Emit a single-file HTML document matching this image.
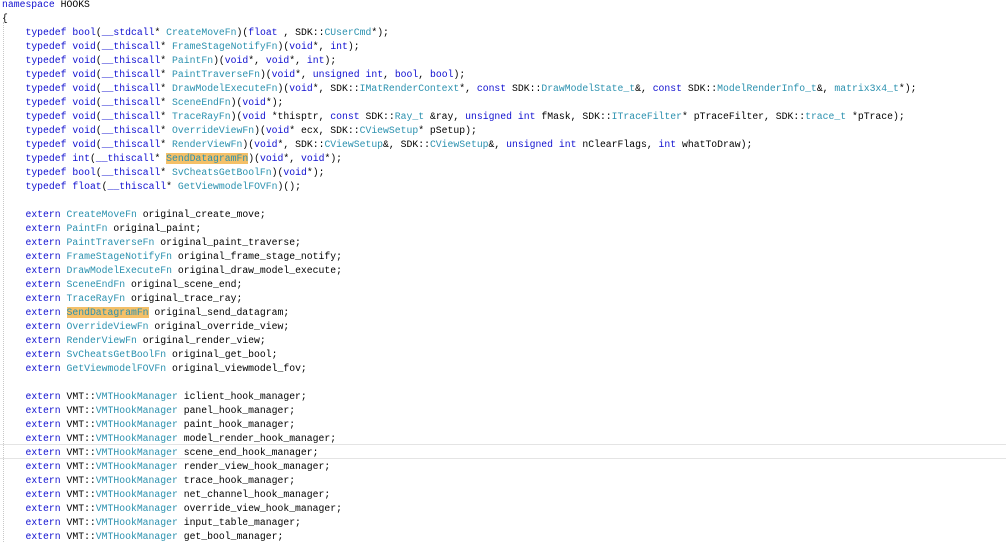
<!DOCTYPE html><html><head><style>
html,body{margin:0;padding:0;background:#fff;width:1006px;height:548px;overflow:hidden}
pre{margin:0;position:absolute;left:2px;top:-2px;font-family:"Liberation Mono",monospace;font-size:9.77px;line-height:14px;color:#000}
.k{color:#1010d0}.t{color:#2b91af}.h{background:#f4c068}
.cur{position:absolute;left:0;top:444px;width:1006px;height:13px;border-top:1px solid #e4e4e4;border-bottom:1px solid #e4e4e4}
.g{position:absolute;left:3px;top:22px;height:520px;border-left:1px dotted #c8c8c8}
</style></head><body>
<div class="cur"></div><div class="g"></div>
<pre><span class="k">namespace</span> HOOKS
{
    <span class="k">typedef</span> <span class="k">bool</span>(<span class="k">__stdcall</span>* <span class="t">CreateMoveFn</span>)(<span class="k">float</span> , SDK::<span class="t">CUserCmd</span>*);
    <span class="k">typedef</span> <span class="k">void</span>(<span class="k">__thiscall</span>* <span class="t">FrameStageNotifyFn</span>)(<span class="k">void</span>*, <span class="k">int</span>);
    <span class="k">typedef</span> <span class="k">void</span>(<span class="k">__thiscall</span>* <span class="t">PaintFn</span>)(<span class="k">void</span>*, <span class="k">void</span>*, <span class="k">int</span>);
    <span class="k">typedef</span> <span class="k">void</span>(<span class="k">__thiscall</span>* <span class="t">PaintTraverseFn</span>)(<span class="k">void</span>*, <span class="k">unsigned</span> <span class="k">int</span>, <span class="k">bool</span>, <span class="k">bool</span>);
    <span class="k">typedef</span> <span class="k">void</span>(<span class="k">__thiscall</span>* <span class="t">DrawModelExecuteFn</span>)(<span class="k">void</span>*, SDK::<span class="t">IMatRenderContext</span>*, <span class="k">const</span> SDK::<span class="t">DrawModelState_t</span>&amp;, <span class="k">const</span> SDK::<span class="t">ModelRenderInfo_t</span>&amp;, <span class="t">matrix3x4_t</span>*);
    <span class="k">typedef</span> <span class="k">void</span>(<span class="k">__thiscall</span>* <span class="t">SceneEndFn</span>)(<span class="k">void</span>*);
    <span class="k">typedef</span> <span class="k">void</span>(<span class="k">__thiscall</span>* <span class="t">TraceRayFn</span>)(<span class="k">void</span> *thisptr, <span class="k">const</span> SDK::<span class="t">Ray_t</span> &amp;ray, <span class="k">unsigned</span> <span class="k">int</span> fMask, SDK::<span class="t">ITraceFilter</span>* pTraceFilter, SDK::<span class="t">trace_t</span> *pTrace);
    <span class="k">typedef</span> <span class="k">void</span>(<span class="k">__thiscall</span>* <span class="t">OverrideViewFn</span>)(<span class="k">void</span>* ecx, SDK::<span class="t">CViewSetup</span>* pSetup);
    <span class="k">typedef</span> <span class="k">void</span>(<span class="k">__thiscall</span>* <span class="t">RenderViewFn</span>)(<span class="k">void</span>*, SDK::<span class="t">CViewSetup</span>&amp;, SDK::<span class="t">CViewSetup</span>&amp;, <span class="k">unsigned</span> <span class="k">int</span> nClearFlags, <span class="k">int</span> whatToDraw);
    <span class="k">typedef</span> <span class="k">int</span>(<span class="k">__thiscall</span>* <span class="t h">SendDatagramFn</span>)(<span class="k">void</span>*, <span class="k">void</span>*);
    <span class="k">typedef</span> <span class="k">bool</span>(<span class="k">__thiscall</span>* <span class="t">SvCheatsGetBoolFn</span>)(<span class="k">void</span>*);
    <span class="k">typedef</span> <span class="k">float</span>(<span class="k">__thiscall</span>* <span class="t">GetViewmodelFOVFn</span>)();

    <span class="k">extern</span> <span class="t">CreateMoveFn</span> original_create_move;
    <span class="k">extern</span> <span class="t">PaintFn</span> original_paint;
    <span class="k">extern</span> <span class="t">PaintTraverseFn</span> original_paint_traverse;
    <span class="k">extern</span> <span class="t">FrameStageNotifyFn</span> original_frame_stage_notify;
    <span class="k">extern</span> <span class="t">DrawModelExecuteFn</span> original_draw_model_execute;
    <span class="k">extern</span> <span class="t">SceneEndFn</span> original_scene_end;
    <span class="k">extern</span> <span class="t">TraceRayFn</span> original_trace_ray;
    <span class="k">extern</span> <span class="t h">SendDatagramFn</span> original_send_datagram;
    <span class="k">extern</span> <span class="t">OverrideViewFn</span> original_override_view;
    <span class="k">extern</span> <span class="t">RenderViewFn</span> original_render_view;
    <span class="k">extern</span> <span class="t">SvCheatsGetBoolFn</span> original_get_bool;
    <span class="k">extern</span> <span class="t">GetViewmodelFOVFn</span> original_viewmodel_fov;

    <span class="k">extern</span> VMT::<span class="t">VMTHookManager</span> iclient_hook_manager;
    <span class="k">extern</span> VMT::<span class="t">VMTHookManager</span> panel_hook_manager;
    <span class="k">extern</span> VMT::<span class="t">VMTHookManager</span> paint_hook_manager;
    <span class="k">extern</span> VMT::<span class="t">VMTHookManager</span> model_render_hook_manager;
    <span class="k">extern</span> VMT::<span class="t">VMTHookManager</span> scene_end_hook_manager;
    <span class="k">extern</span> VMT::<span class="t">VMTHookManager</span> render_view_hook_manager;
    <span class="k">extern</span> VMT::<span class="t">VMTHookManager</span> trace_hook_manager;
    <span class="k">extern</span> VMT::<span class="t">VMTHookManager</span> net_channel_hook_manager;
    <span class="k">extern</span> VMT::<span class="t">VMTHookManager</span> override_view_hook_manager;
    <span class="k">extern</span> VMT::<span class="t">VMTHookManager</span> input_table_manager;
    <span class="k">extern</span> VMT::<span class="t">VMTHookManager</span> get_bool_manager;
</pre>
</body></html>
